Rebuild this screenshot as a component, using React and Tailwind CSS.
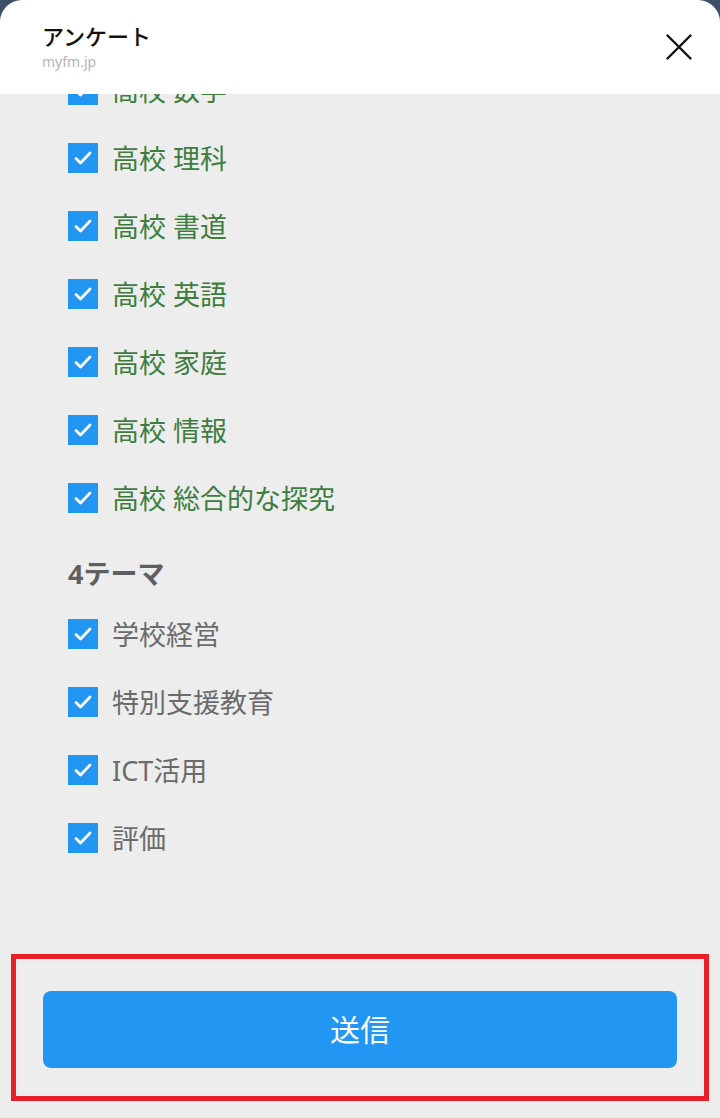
const subjects = ['数学', '理科', '書道', '英語', '家庭', '情報', '総合的な探究'];
const themes = ['学校経営', '特別支援教育', 'ICT活用', '評価'];

function Check({ label, color }) {
  return (
    <label className="flex h-[68px] items-center gap-[14px]">
      <span className="flex h-[30px] w-[30px] shrink-0 items-center justify-center bg-[#2196f3]">
        <svg width="20" height="20" viewBox="0 0 20 20" fill="none">
          <path d="M3 10.5l4.5 4.5L17 5" stroke="#fff" strokeWidth="2.8" strokeLinecap="round" strokeLinejoin="round" />
        </svg>
      </span>
      <span className={`text-[27px] leading-none ${color}`}>{label}</span>
    </label>
  );
}

export default function App() {
  return (
    <div className="flex h-[1118px] w-[720px] flex-col overflow-hidden bg-[#3e5068]" style={{ fontFamily: '"Noto Sans", "Noto Sans CJK JP", sans-serif' }}>
      <header className="flex h-[94px] shrink-0 items-center justify-between rounded-t-[22px] bg-white pl-[42px] pr-[24px]">
        <div className="flex flex-col">
          <h1 className="text-[22px] font-medium leading-[30px] text-[#111]">アンケート</h1>
          <p className="text-[14px] leading-[22px] text-[#b5b5b5]">myfm.jp</p>
        </div>
        <button className="p-1">
          <svg width="26" height="26" viewBox="0 0 26 26">
            <path d="M1.5 1.5l23 23M24.5 1.5l-23 23" stroke="#111" strokeWidth="2.4" strokeLinecap="round" />
          </svg>
        </button>
      </header>

      <main className="flex flex-1 flex-col overflow-hidden bg-[#ededed]">
        <div className="mt-[-38px] flex-1 pl-[68px]">
          {subjects.map((s) => (
            <Check key={s} label={`高校 ${s}`} color="text-[#3e7d3e]" />
          ))}
          <h2 className="flex h-[68px] items-end pb-[6px] text-[27px] font-bold text-[#5f5f5f]">4テーマ</h2>
          {themes.map((t) => (
            <Check key={t} label={t} color="text-[#6b6b6b]" />
          ))}
        </div>

        <div className="mx-[11px] mb-[17px] border-[5px] border-[#e8202a] px-[27px] pb-[28px] pt-[32px]">
          <button className="flex h-[77px] w-full items-center justify-center rounded-[8px] bg-[#2196f3] text-[30px] text-white">
            送信
          </button>
        </div>
      </main>
    </div>
  );
}
